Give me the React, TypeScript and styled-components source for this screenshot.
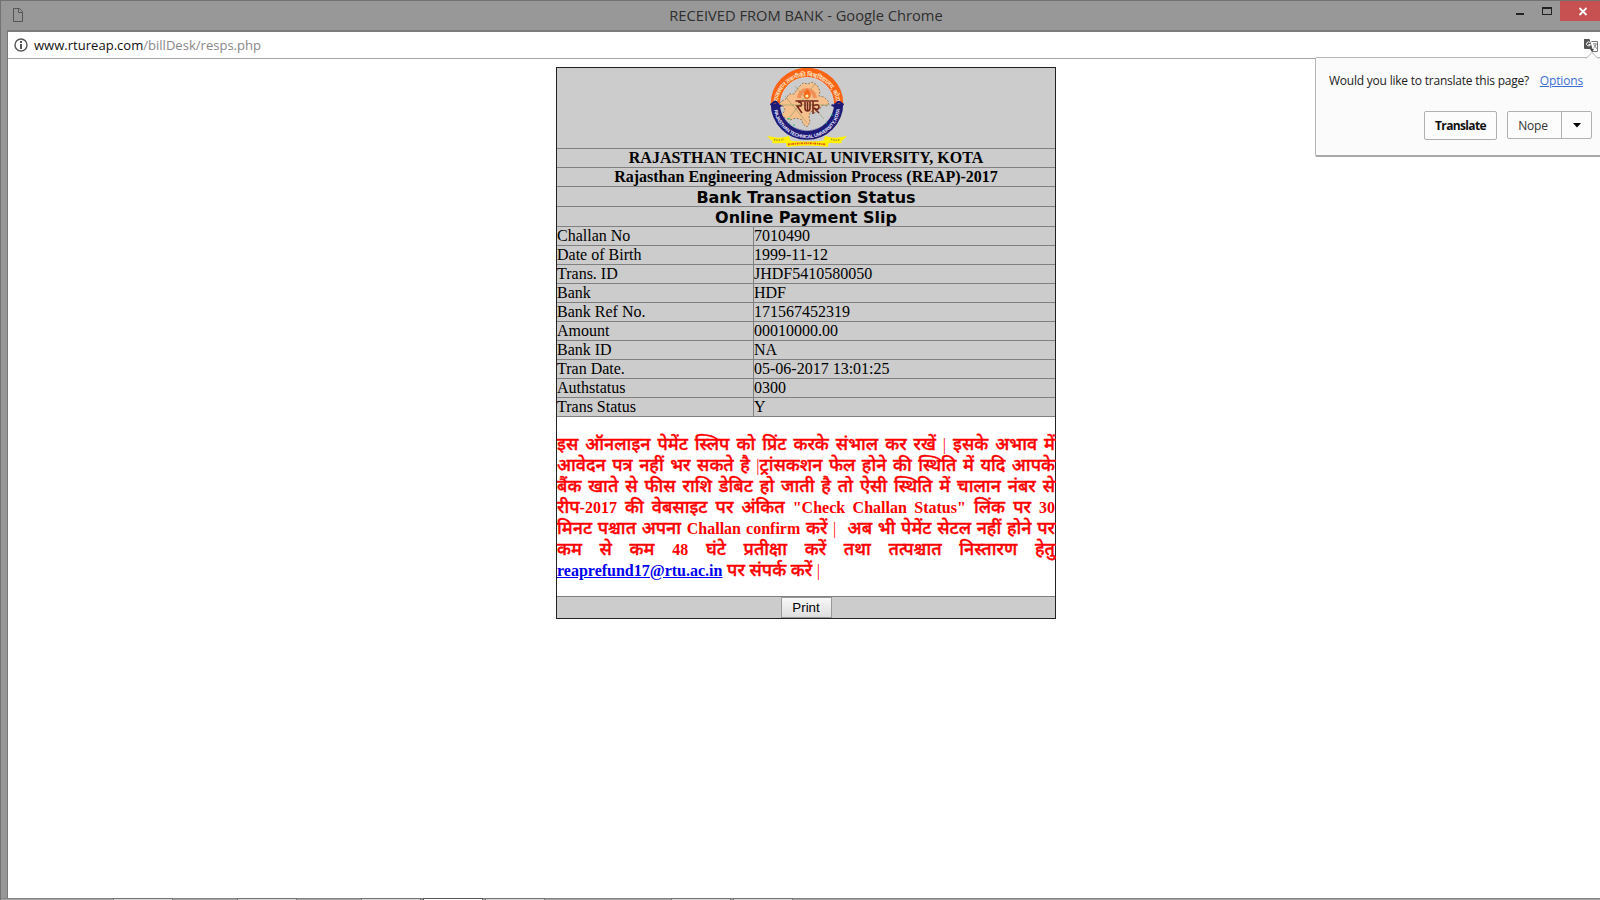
import React from "react";
import styled, { createGlobalStyle } from "styled-components";

const Global = createGlobalStyle`
  * { box-sizing: border-box; }
  body { margin: 0; background: #fff; overflow: hidden; }
`;

const Window = styled.div`
  width: 1600px;
  height: 900px;
  display: flex;
  flex-direction: column;
  background: #989898;
  border-top: 1px solid #727272;
  border-left: 1px solid #727272;
  font-family: "Open Sans", "Noto Sans", sans-serif;
`;

const TitleBar = styled.header`
  height: 29px;
  flex: none;
  display: grid;
  grid-template-columns: 116px 1fr 116px;
  align-items: start;
`;

const PageIcon = styled.svg`
  margin: 7px 0 0 11px;
`;

const Title = styled.h1`
  margin: 4px 0 0 11px;
  text-align: center;
  font-size: 14.7px;
  line-height: 20px;
  font-weight: 400;
  color: #2e2e2e;
`;

const Controls = styled.div`
  display: flex;
  justify-content: flex-end;
`;

const WindowGlyph = styled.svg`
  width: 12px;
  height: 20px;
  margin-right: 14px;

  &:last-of-type { margin-right: 7px; }
`;

const CloseButton = styled.div`
  width: 40px;
  height: 20px;
  padding: 6px 0 0 18px;
  background: #c75050;
  line-height: 0;
`;

const Body = styled.div`
  flex: 1;
  display: flex;
  flex-direction: column;
  margin-left: 6px;
  border-left: 1px solid #777;
  border-top: 2px solid #7c7c7c;
  background: #fff;
  min-height: 0;
`;

const AddressBar = styled.div`
  height: 27px;
  flex: none;
  display: flex;
  align-items: center;
  padding: 0 1px 0 6px;
  border-bottom: 1px solid #a5a5a5;
`;

const Address = styled.span`
  margin-left: 6px;
  flex: 1;
  font-size: 13.05px;
  line-height: 18px;
  color: #111;
`;

const Path = styled.span`
  color: #888;
`;

const Viewport = styled.main`
  flex: 1;
  padding: 8px 0 0 4px;
  position: relative;
`;

const Slip = styled.section`
  width: 500px;
  margin: 0 auto;
  border: 1px solid #222;
  background: #ccc;
  color: #000;
  font: 16px/18px "Liberation Serif", "Times New Roman", serif;
`;

const LogoRow = styled.div`
  height: 81px;
  display: flex;
  justify-content: center;
  padding-left: 2px;
  border-bottom: 1px solid #808080;
`;

const Heading = styled.div<{ $sans?: boolean }>`
  height: ${(p) => (p.$sans ? 20 : 19)}px;
  border-bottom: 1px solid #808080;
  text-align: center;
  font-weight: 700;
  font-family: ${(p) => (p.$sans ? '"DejaVu Sans", Verdana, sans-serif' : "inherit")};
  line-height: ${(p) => (p.$sans ? 21 : 18)}px;
`;

const Row = styled.div`
  display: grid;
  grid-template-columns: 196px 1fr;
  height: 19px;
  border-bottom: 1px solid #808080;
`;

const Value = styled.div`
  border-left: 1px solid #808080;
`;

const Notice = styled.div`
  height: 180px;
  padding: 18px 0 0 0;
  background: #fff;
  border-bottom: 1px solid #808080;
  color: #f00;
  font: 500 17.8px/21px "Noto Sans Devanagari", "Noto Sans", sans-serif;
  -webkit-text-stroke: 0.4px #f00;
`;

const Line = styled.div<{ $last?: boolean }>`
  height: 21px;
  white-space: nowrap;
  text-align-last: ${(p) => (p.$last ? "left" : "justify")};
`;

const Latin = styled.span`
  font: 700 16px/20px "Liberation Serif", "Times New Roman", serif;
  -webkit-text-stroke: 0;
`;

const Bar = styled.span`
  font: 400 16px/20px "Liberation Serif", "Times New Roman", serif;
  -webkit-text-stroke: 0;
`;

const Mail = styled.a`
  font: 700 16px/20px "Liberation Serif", "Times New Roman", serif;
  -webkit-text-stroke: 0;
  color: #00e;
  text-decoration: underline;
`;

const Footer = styled.div`
  height: 21px;
  display: flex;
  justify-content: center;
`;

const PrintButton = styled.button`
  width: 51px;
  height: 21px;
  padding: 0;
  border: 1px solid #999;
  background: linear-gradient(#f8f8f8, #dedede);
  font: 13.33px "Liberation Sans", Arial, sans-serif;
  color: #000;
`;

const Popup = styled.aside`
  position: absolute;
  top: -2px;
  right: -1px;
  width: 286px;
  height: 100px;
  padding: 14px 9px 0 13px;
  background: #fbfbfb;
  border: 1px solid #b5b5b5;
  border-bottom: 2px solid #a8a8a8;
  border-radius: 2px;
  font-size: 12px;
`;

const Pointer = styled.svg`
  position: absolute;
  top: -7px;
  right: 1px;
`;

const Question = styled.div`
  display: flex;
  justify-content: space-between;
  padding-right: 8px;
  line-height: 18px;
  letter-spacing: -0.22px;
  color: #222;
`;

const Options = styled.a`
  letter-spacing: -0.15px;
  color: #3b6fd4;
  text-decoration: underline;
`;

const Actions = styled.div`
  display: flex;
  justify-content: flex-end;
  gap: 10px;
  margin: 21px -1px 0 0;
`;

const Action = styled.div<{ $strong?: boolean }>`
  height: ${(p) => (p.$strong ? 29 : 28)}px;
  width: ${(p) => (p.$strong ? 73 : 85)}px;
  display: flex;
  align-items: center;
  justify-content: center;
  border: 1px solid #b0b0b0;
  border-radius: 2px;
  background: #fcfcfc;
  font-weight: ${(p) => (p.$strong ? 700 : 400)};
  letter-spacing: ${(p) => (p.$strong ? -0.65 : -0.2)}px;
  color: #111;
`;

const Nope = styled.span`
  flex: 1;
  padding-right: 3px;
  text-align: center;
  color: #333;
`;

const Arrow = styled.span`
  width: 30px;
  height: 100%;
  display: flex;
  align-items: center;
  justify-content: center;
  border-left: 1px solid #b0b0b0;
`;

const Taskbar = styled.footer`
  height: 2px;
  flex: none;
  display: flex;
  padding-left: 112px;
  background: #a2a2a2;
  border-top: 1px solid #858585;
`;

const Task = styled.div<{ $gap: number; $active?: boolean }>`
  width: 60px;
  height: 2px;
  margin: -1px ${(p) => p.$gap}px 0 0;
  border: 1px solid ${(p) => (p.$active ? "#555" : "#737373")};
  border-bottom: 0;
  background: ${(p) => (p.$active ? "#fff" : "#d8d8d8")};
`;

const rows = [
  ["Challan No", "7010490"],
  ["Date of Birth", "1999-11-12"],
  ["Trans. ID", "JHDF5410580050"],
  ["Bank", "HDF"],
  ["Bank Ref No.", "171567452319"],
  ["Amount", "00010000.00"],
  ["Bank ID", "NA"],
  ["Tran Date.", "05-06-2017 13:01:25"],
  ["Authstatus", "0300"],
  ["Trans Status", "Y"],
];

const taskGaps = [64, 64, 2, 2, 126, 2, 0];

function Emblem() {
  return (
    <svg width="82" height="80" viewBox="0 0 82 80">
      <defs>
        <path id="upper" d="M11.500 38A29.500 29.500 0 1 1 70.500 38" />
        <path id="lower" d="M7.800 37A33.200 33.200 0 0 0 74.200 37" />
      </defs>
      <path d="M9.500 36A31.500 31.500 0 0 1 72.500 36" fill="none" stroke="#fa6414" strokeWidth="9.500" />
      <path d="M9.500 35.500A31.500 31.500 0 0 0 72.500 35.500" fill="none" stroke="#1d1a78" strokeWidth="9.500" />
      <circle cx="41" cy="36" r="26.600" fill="none" stroke="#ddd" strokeWidth=".6" />
      <path d="M4.500 37l5-4 4 5 3-1M65.500 37l3 1 4-5 5 4" fill="none" stroke="#1d1a78" strokeWidth="2" />
      <path d="M16 33l4-2 3-5 5 0 4-6 5-5 5 1 4-2 5 3 3 6-1 5 5 1 5 5-2 4-5-1-2 4-3-1-2 5-4-2-2 5 1 6-3 5-4-3-1-4-6-2-6 2-5-2-3-3 3-5-2-4-4-2z" fill="#f6c08c" stroke="#6c6048" strokeWidth=".7" strokeDasharray="2 1.500" />
      <path d="M19 28l22 27M24 49l25-33M29 18l29 33M16 37h48" fill="none" stroke="#899b66" strokeWidth=".6" />
      <path d="M31 30a10 10 0 0 1 20 0h-4a6 6 0 0 0-12 0z" fill="#ee9058" />
      <path d="M41 21c5 4 5 9 0 10c-5-1-4-6 0-10z" fill="#f7671b" />
      <circle cx="41" cy="28" r="1.600" fill="#fff3b0" />
      <path d="M29.500 33h23M32 34q5 0 3 4l-4 0 5 7M39 34v6q0 3 2.500 3t2.500-3v-6M41.500 34v9M47 33v13M47 38q6-3 6 1t-5 1l5 5" fill="none" stroke="#74281c" strokeWidth="1.600" />
      <path d="M23 55h1M27 57h2M22 50l2 1M65 47h2M60 55h1" stroke="#17c878" strokeWidth="1.200" />
      <text fontFamily="Noto Sans Devanagari, Noto Sans, sans-serif" fontSize="6.200" fontWeight="600" fill="#ffe9cc">
        <textPath href="#upper" startOffset="4" textLength="84">राजस्थान तकनीकी विश्वविद्यालय, कोटा</textPath>
      </text>
      <text fontFamily="Liberation Sans, Arial, sans-serif" fontSize="4.800" fontWeight="700" fill="#e8e8ff">
        <textPath href="#lower" startOffset="5" textLength="95">RAJASTHAN TECHNICAL UNIVERSITY, KOTA</textPath>
      </text>
      <path d="M1 68l6 1q8 2 16-1l2 6q-9 2-19 1l1-2-2-1zM81 68l-6 1q-8 2-16-1l-2 6q9 2 19 1l-1-2 2-1z" fill="#fff000" />
      <path d="M19 72q22 3 44 0l-1 7q-20-3-41 0z" fill="#fff200" />
      <path d="M8 71.500q6 1.500 10-.500M65 71q5 2 9 .500" fill="none" stroke="#8a7d20" strokeWidth="1.300" strokeDasharray="1.200 1.200" />
      <path d="M22 76.500q19-2.500 38 0" fill="none" stroke="#e8501a" strokeWidth="1.900" strokeDasharray="1.800 .9 1 .7" />
    </svg>
  );
}

export default function App() {
  return (
    <>
      <Global />
      <Window>
        <TitleBar>
          <PageIcon width="12" height="15"><path d="M1.500.500h6l3 3v10h-9zM6.500.500v4h4" fill="none" stroke="#555" /></PageIcon>
          <Title>RECEIVED FROM BANK - Google Chrome</Title>
          <Controls>
            <WindowGlyph viewBox="0 0 12 20"><path d="M1 12h8v2H1z" fill="#222" /></WindowGlyph>
            <WindowGlyph viewBox="0 0 12 20"><path d="M1 6h10v8H1zM2 8v5h8V8z" fill="#222" fillRule="evenodd" /></WindowGlyph>
            <CloseButton>
              <svg width="10" height="9"><path d="M1.500 1l7 7M8.500 1l-7 7" stroke="#fff" strokeWidth="1.800" /></svg>
            </CloseButton>
          </Controls>
        </TitleBar>
        <Body>
          <AddressBar>
            <svg width="14" height="14"><circle cx="7" cy="7" r="6" fill="none" stroke="#555" strokeWidth="1.400" /><path d="M6 3h2v2H6zM6 6h2v5H6z" fill="#555" /></svg>
            <Address>www.rtureap.com<Path>/billDesk/resps.php</Path></Address>
            <svg width="15" height="15" viewBox="0 0 15 15">
              <path d="M7.500 3.500h6v10H8" fill="#fff" stroke="#777" />
              <path d="M0 1h5.500l3 10H1q-1 0-1-1z" fill="#555" />
              <path d="M6 11h4l-2 3z" fill="#444" />
              <path d="M6 4.500a2 2 0 1 0 .5 2H4.500" fill="none" stroke="#fff" />
              <path d="M9 6h4M11 5v1M12 6q-.500 3-2.500 4M10 7l3 4" fill="none" stroke="#888" strokeWidth=".9" />
            </svg>
          </AddressBar>
          <Viewport>
            <Slip>
              <LogoRow><Emblem /></LogoRow>
              <Heading>RAJASTHAN TECHNICAL UNIVERSITY, KOTA</Heading>
              <Heading>Rajasthan Engineering Admission Process (REAP)-2017</Heading>
              <Heading $sans>Bank Transaction Status</Heading>
              <Heading $sans>Online Payment Slip</Heading>
              {rows.map(([k, v]) => (
                <Row key={k}><div>{k}</div><Value>{v}</Value></Row>
              ))}
              <Notice>
                <Line>इस ऑनलाइन पेमेंट स्लिप को प्रिंट करके संभाल कर रखें <Bar>|</Bar> इसके अभाव में</Line>
                <Line>आवेदन पत्र नहीं भर सकते है <Bar>|</Bar>ट्रांसकशन फेल होने की स्थिति में यदि आपके</Line>
                <Line>बैंक खाते से फीस राशि डेबिट हो जाती है तो ऐसी स्थिति में चालान नंबर से</Line>
                <Line>रीप<Latin>-2017</Latin> की वेबसाइट पर अंकित <Latin>"Check Challan Status"</Latin> लिंक पर <Latin>30</Latin></Line>
                <Line>मिनट पश्चात अपना <Latin>Challan confirm</Latin> करें <Bar>|</Bar>&nbsp; अब भी पेमेंट सेटल नहीं होने पर</Line>
                <Line>कम से कम <Latin>48</Latin> घंटे प्रतीक्षा करें तथा तत्पश्चात निस्तारण हेतु</Line>
                <Line $last><Mail>reaprefund17@rtu.ac.in</Mail> पर संपर्क करें <Bar>|</Bar></Line>
              </Notice>
              <Footer><PrintButton>Print</PrintButton></Footer>
            </Slip>
            <Popup>
              <Pointer width="14" height="8"><path d="M1 7.500l6-6 6 6" fill="#fbfbfb" stroke="#b5b5b5" /><path d="M2 7.500h10" stroke="#fbfbfb" /></Pointer>
              <Question><span>Would you like to translate this page?</span><Options>Options</Options></Question>
              <Actions>
                <Action $strong>Translate</Action>
                <Action>
                  <Nope>Nope</Nope>
                  <Arrow><svg width="8" height="5"><path d="M0 0h8L4 4.500z" fill="#000" /></svg></Arrow>
                </Action>
              </Actions>
            </Popup>
          </Viewport>
        </Body>
        <Taskbar>
          {taskGaps.map((gap, i) => <Task key={i} $gap={gap} $active={i === 3} />)}
        </Taskbar>
      </Window>
    </>
  );
}
